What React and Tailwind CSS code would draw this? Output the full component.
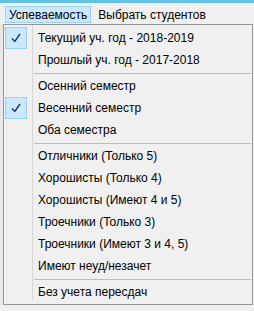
export default function App() {
  const groups = [
    [
      { label: 'Текущий уч. год - 2018-2019', checked: true },
      { label: 'Прошлый уч. год - 2017-2018' },
    ],
    [
      { label: 'Осенний семестр' },
      { label: 'Весенний семестр', checked: true },
      { label: 'Оба семестра' },
    ],
    [
      { label: 'Отличники (Только 5)' },
      { label: 'Хорошисты (Только 4)' },
      { label: 'Хорошисты (Имеют 4 и 5)' },
      { label: 'Троечники (Только 3)' },
      { label: 'Троечники (Имеют 3 и 4, 5)' },
      { label: 'Имеют неуд/незачет' },
    ],
    [{ label: 'Без учета пересдач' }],
  ];

  return (
    <div
      className="w-[254px] h-[311px] overflow-hidden bg-[#f0f0f0] text-[12px] text-black flex flex-col"
      style={{ fontFamily: '"Liberation Sans", Arial, sans-serif' }}
    >
      {/* Title strip */}
      <div className="h-[3px] bg-[#62c3e9]" />

      {/* Menu bar */}
      <div className="h-[21px] flex items-start pt-[3px] pl-[5px]">
        <div className="h-[17px] px-[3px] flex items-center bg-[#cce8ff] border border-[#99d1ff]">
          Успеваемость
        </div>
        <div className="h-[17px] px-[7px] flex items-center">Выбрать студентов</div>
      </div>

      {/* Dropdown */}
      <div className="flex">
        <div className="w-[3px] bg-[#e8e8e8]" />
        <div className="relative w-[250px] border border-[#979797] bg-[#f0f0f0] pt-[2px] pb-[1px]">
          <div className="absolute left-[28px] top-0 bottom-[4px] w-px bg-[#d7d7d7]" />
          {groups.map((group, gi) => (
            <div key={gi}>
              {gi > 0 && (
                <div className="h-[4px] flex items-center pl-[30px] pr-[1px]">
                  <div className="h-px w-full bg-[#bdbdbd]" />
                </div>
              )}
              {group.map((item, i) => (
                <div key={i} className="h-[22px] flex items-center">
                  <div className="w-[29px] flex items-center pl-[1px]">
                    {item.checked && (
                      <div className="w-[22px] h-[22px] bg-[#cce8ff] border border-[#99d1ff] flex items-center justify-center">
                        <svg width="10" height="10" viewBox="0 0 10 10">
                          <path d="M1 5.5 L3.8 8.5 L9 1" fill="none" stroke="#1c2f8a" strokeWidth="1.4" />
                        </svg>
                      </div>
                    )}
                  </div>
                  <span className="pl-[5px] whitespace-nowrap">{item.label}</span>
                </div>
              ))}
            </div>
          ))}
        </div>
      </div>
    </div>
  );
}
